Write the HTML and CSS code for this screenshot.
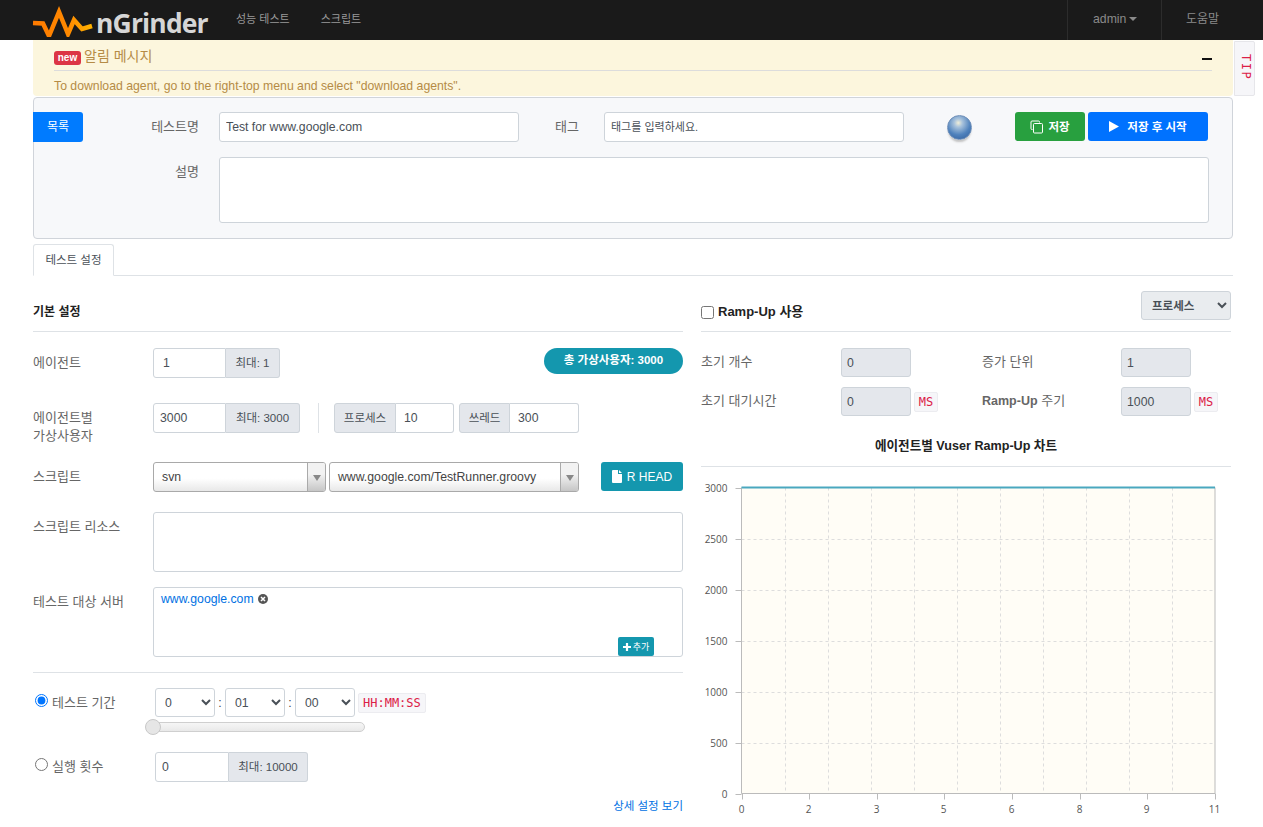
FILE: index.html
```html
<!DOCTYPE html>
<html lang="ko">
<head>
<meta charset="utf-8">
<title>nGrinder</title>
<link rel="stylesheet" href="styles.css">
</head>
<body>
<header class="navbar">
  <a class="brand">
    <svg class="brand-mark" width="62" height="32" viewBox="0 0 62 32">
      <defs><linearGradient id="lg" x1="0" x2="1" y1="0" y2="0"><stop offset="0" stop-color="#ff7a00"/><stop offset="0.6" stop-color="#ff8a00"/><stop offset="1" stop-color="#ffb400"/></linearGradient></defs>
      <path d="M1 19 L11 19.500 L17 32 L27 8 L36 30 L42 16 L50 25 L60 22" transform="translate(0 -1)" fill="none" stroke="url(#lg)" stroke-width="4.500" stroke-linejoin="miter"/>
    </svg>
    <span class="brand-name">nGrinder</span>
  </a>
  <nav class="nav-main"><a>성능 테스트</a><a>스크립트</a></nav>
  <nav class="nav-right"><a class="nav-user">admin<i class="caret"></i></a><a class="nav-help">도움말</a></nav>
</header>

<main class="page">
  <section class="alert">
    <div class="alert-head">
      <span class="badge-new">new</span><span class="alert-title">알림 메시지</span>
      <i class="alert-min"></i>
    </div>
    <p class="alert-text">To download agent, go to the right-top menu and select "download agents".</p>
    <code class="tip">TIP</code>
  </section>

  <section class="panel">
    <div class="panel-row">
      <a class="btn btn-list">목록</a>
      <label class="panel-label name-label">테스트명</label>
      <input class="field name-input" type="text" value="Test for www.google.com">
      <label class="panel-label tag-label">태그</label>
      <input class="field tag-input" type="text" placeholder="태그를 입력하세요.">
      <i class="sphere"></i>
      <a class="btn btn-save">
        <svg width="14" height="14" viewBox="0 0 14 14" fill="none" stroke="#fff" stroke-width="1"><path d="M9.500 2.500 V2 A1 1 0 0 0 8.500 1 H2 A1 1 0 0 0 1 2 V8.500 A1 1 0 0 0 2 9.500 H2.500"/><rect x="3.500" y="3.500" width="9" height="9.500" rx="1"/></svg>
        저장</a>
      <a class="btn btn-start">
        <svg width="10" height="11" viewBox="0 0 10 11"><path d="M0 0 L10 5.500 L0 11 Z" fill="#fff"/></svg>
        저장 후 시작</a>
    </div>
    <div class="panel-row desc-row">
      <label class="panel-label desc-label">설명</label>
      <textarea class="field desc-input"></textarea>
    </div>
  </section>

  <div class="tabs"><a class="tab">테스트 설정</a></div>

  <div class="columns">
    <section class="col-left">
      <h4 class="head">기본 설정</h4>

      <div class="row row-agent">
        <label class="lbl">에이전트</label>
        <div class="group"><input class="gi w73 gi-one" value="1"><span class="addon w54">최대: 1</span></div>
        <span class="pill">총 가상사용자: 3000</span>
      </div>

      <div class="row row-vuser">
        <label class="lbl two">에이전트별<br>가상사용자</label>
        <div class="group"><input class="gi w73" value="3000"><span class="addon w74">최대: 3000</span></div>
        <i class="vline"></i>
        <div class="group"><span class="addon addon-l w62">프로세스</span><input class="gi gi-r w58" value="10"></div>
        <div class="group g-thread"><span class="addon addon-l w51">쓰레드</span><input class="gi gi-r w69" value="300"></div>
      </div>

      <div class="row row-script">
        <label class="lbl">스크립트</label>
        <div class="combo w173"><span>svn</span><b></b></div>
        <div class="combo w250"><span>www.google.com/TestRunner.groovy</span><b></b></div>
        <a class="btn btn-head">
          <svg width="10" height="13" viewBox="0 0 10 13"><path d="M0 1 A1 1 0 0 1 1 0 H6 V4 H10 V12 A1 1 0 0 1 9 13 H1 A1 1 0 0 1 0 12 Z M7 0 L10 3 H7 Z" fill="#fff"/></svg>
          R HEAD</a>
      </div>

      <div class="row row-res">
        <label class="lbl">스크립트 리소스</label>
        <div class="box box-res"></div>
      </div>

      <div class="row row-target">
        <label class="lbl">테스트 대상 서버</label>
        <div class="box box-target">
          <a class="host">www.google.com</a>
          <svg class="host-x" width="10" height="10" viewBox="0 0 10 10"><circle cx="5" cy="5" r="5" fill="#555"/><path d="M3 3 L7 7 M7 3 L3 7" stroke="#fff" stroke-width="1.500"/></svg>
          <a class="btn-add"><svg width="8" height="8" viewBox="0 0 8 8"><path d="M4 0 V8 M0 4 H8" stroke="#fff" stroke-width="2.200"/></svg>추가</a>
        </div>
      </div>

      <hr class="rule">

      <div class="row row-dur">
        <label class="radio"><input type="radio" name="m" checked><span>테스트 기간</span></label>
        <div class="dur-body">
          <div class="dur-line">
            <select class="sel"><option>0</option></select><span class="colon">:</span>
            <select class="sel"><option>01</option></select><span class="colon">:</span>
            <select class="sel"><option>00</option></select>
            <code class="code code-hms">HH:MM:SS</code>
          </div>
          <div class="slider"><i class="knob"></i></div>
        </div>
      </div>

      <div class="row row-count">
        <label class="radio"><input type="radio" name="m"><span>실행 횟수</span></label>
        <div class="group"><input class="gi w74" value="0"><span class="addon w79">최대: 10000</span></div>
      </div>

      <div class="more"><a>상세 설정 보기</a></div>
    </section>

    <section class="col-right">
      <div class="head head-ramp">
        <label class="ramp-check"><input type="checkbox"><span>Ramp-Up 사용</span></label>
        <select class="sel sel-proc"><option>프로세스</option></select>
      </div>
      <div class="ramp-grid">
        <label class="lbl">초기 개수</label><input class="ro" value="0" readonly><span></span>
        <label class="lbl">증가 단위</label><input class="ro" value="1" readonly><span></span>
        <label class="lbl">초기 대기시간</label><input class="ro" value="0" readonly><code class="code">MS</code>
        <label class="lbl"><b>Ramp-Up</b> 주기</label><input class="ro" value="1000" readonly><code class="code">MS</code>
      </div>
      <h4 class="chart-title">에이전트별 Vuser Ramp-Up 차트</h4>
      <svg class="chart" width="530" height="360" viewBox="0 0 530 360" id="chart"></svg>
    </section>
  </div>
</main>
<script src="chart.js"></script>
</body>
</html>
```
FILE: styles.css
```css
* { box-sizing: border-box; }
html, body { margin: 0; height: 827px; overflow: hidden; }
body { font: 12.250px/18px "Liberation Sans", "Noto Sans CJK KR", sans-serif; color: #495057; background: #fff; }
input, select, textarea { font: inherit; color: #495057; }

.navbar { height: 40px; background: #1a1a1a; display: flex; align-items: stretch; padding-left: 32px; }
.brand { display: flex; align-items: flex-start; width: 204px; position: relative; }
.brand-mark { margin-top: 5px; }
.brand-name { font: 700 26.500px/1 "Open Sans", sans-serif; color: #d6d6d6; margin: 10px 0 0 2px; letter-spacing: -0.850px; }
.nav-main { display: flex; gap: 31px; color: #999; font-size: 11px; line-height: 38px; }
.nav-right { margin-left: auto; display: flex; margin-right: 29px; color: #8a8a8a; line-height: 39px; }
.nav-user { width: 95px; border-left: 1px solid #2c2c2c; border-right: 1px solid #2c2c2c; padding-left: 25px; }
.nav-help { width: 72px; padding-left: 24px; font-size: 12px; }
.caret { display: inline-block; margin-left: 3px; vertical-align: 2px; border: 4px solid transparent; border-top-color: #8a8a8a; border-bottom: 0; }

.page { margin-left: 33px; width: 1200px; }

.alert { position: relative; height: 56px; background: #fcf6dd; border-radius: 0 0 4px 4px; padding: 0 21px; color: #b58b45; }
.alert-head { height: 31px; border-bottom: 1px solid #dcdcdc; display: flex; align-items: flex-start; padding-top: 7px; }
.badge-new { width: 27px; height: 14px; margin-top: 4px; background: #dc3545; border-radius: 3px; color: #fff; font: 700 10px/13px "Liberation Sans", sans-serif; text-align: center; }
.alert-title { font-size: 14px; line-height: 18px; margin-left: 3px; }
.alert-min { margin-left: auto; margin-top: 11px; width: 10px; height: 2px; background: #111; }
.alert-text { margin: 6px 0 0; line-height: 18px; }
.tip { position: absolute; left: 1201px; top: 1px; width: 21px; height: 55px; background: #f6f6f9; border: 1px solid #e6e6ea; border-radius: 0 2px 2px 0; color: #dc2047; font: 12px/17px "DejaVu Sans Mono", monospace; writing-mode: vertical-rl; letter-spacing: 1.500px; padding-top: 12px; }

.panel { margin-top: 1px; height: 142px; background: #f7f8fa; border: 1px solid #d0d4da; border-radius: 4px; padding-top: 14px; }
.panel-row { display: flex; align-items: flex-start; margin-left: -1px; }
.btn { display: flex; align-items: center; justify-content: center; color: #fff; border-radius: 3px; font-weight: 700; font-size: 11.500px; }
.btn-list { width: 50px; height: 30px; background: #007bff; border-radius: 0 3px 3px 0; font-weight: 400; font-size: 12px; }
.panel-label { color: #666; line-height: 30px; text-align: right; font-size: 13px; }
.name-label { width: 116px; }
.field { border: 1px solid #ced4da; border-radius: 3px; background: #fff; padding: 0 6px; display: block; }
.name-input { width: 300px; height: 30px; margin-left: 20px; }
.tag-label { width: 60px; }
.tag-input { width: 300px; height: 30px; margin-left: 25px; }
.tag-input::placeholder { color: #495057; opacity: 1; font-size: 11px; }
.sphere { width: 25px; height: 25px; margin: 3px 0 0 42.500px; border-radius: 50%; background: radial-gradient(circle at 45% 30%, #f0eed8 0, #a9c3dc 20%, #4f82bd 58%, #2d5a98 100%); border: 1px solid #6f8fb8; box-shadow: 0 3px 2px -1px #c4c4c4; }
.btn-save { width: 70px; height: 29px; margin-left: 43.500px; background: #28a03f; gap: 4px; }
.btn-start { width: 120px; height: 29px; margin-left: 3px; background: #0072ff; gap: 8px; }
.desc-row { margin-top: 15px; }
.desc-label { width: 166px; line-height: 30px; }
.desc-input { width: 990px; height: 66px; margin-left: 20px; resize: none; }

.tabs { height: 32px; margin-top: 5px; border-bottom: 1px solid #dee2e6; }
.tab { display: block; width: 81px; height: 32px; border: 1px solid #dee2e6; border-bottom-color: #fff; border-radius: 3px 3px 0 0; text-align: center; line-height: 30px; background: #fff; font-size: 11.500px; }

.columns { display: flex; gap: 18px; margin-top: 15px; align-items: flex-start; }
.col-left { width: 650px; }
.col-right { width: 530px; }
.head { height: 41px; margin: 0; border-bottom: 1px solid #dee2e6; color: #222; font-size: 12px; font-weight: 700; line-height: 43px; }

.row { display: flex; align-items: flex-start; }
.lbl { color: #666; line-height: 30px; font-weight: 400; font-size: 13px; }
.row > .lbl { width: 120px; flex: none; }
.lbl.two { line-height: 18px; padding-top: 6px; }
.row-agent { margin-top: 16px; justify-content: flex-start; }
.row-vuser { margin-top: 25px; }
.row-script { margin-top: 17px; }
.row-res { margin-top: 20px; }
.row-target { margin-top: 15px; }
.row-dur { margin-top: 15px; }
.row-count { margin-top: 20px; }

.group { display: flex; height: 30px; }
.gi { height: 30px; border: 1px solid #ced4da; border-radius: 3px 0 0 3px; padding: 0 6px; background: #fff; }
.gi-one { padding-left: 9px; }
.gi-r { border-radius: 0 3px 3px 0; border-left: 0; padding-left: 8px; }
.addon { height: 30px; background: #e4e7ec; border: 1px solid #ced4da; border-left: 0; border-radius: 0 3px 3px 0; display: flex; align-items: center; justify-content: center; color: #495057; font-size: 11.500px; }
.addon-l { border-left: 1px solid #ced4da; border-radius: 3px 0 0 3px; }
.w73 { width: 73px; } .w74 { width: 74px; } .w54 { width: 54px; }
.w79 { width: 79px; } .w62 { width: 62px; } .w58 { width: 58px; }
.w51 { width: 51px; } .w69 { width: 69px; }
.pill { margin-left: auto; width: 139px; height: 26px; border-radius: 13px; background: #1497ae; color: #fff; font-weight: 700; font-size: 11.500px; text-align: center; line-height: 25px; }
.vline { width: 1px; height: 30px; background: #dee2e6; margin: 0 15px 0 18px; }
.g-thread { margin-left: 5px; }
.combo { position: relative; height: 30px; border: 1px solid #a9a9a9; border-radius: 3px; background: linear-gradient(#fff 55%, #e8e8e8); padding: 0 8px; line-height: 28px; color: #444; }
.combo b { position: absolute; top: 0; right: 0; width: 18px; height: 28px; background: linear-gradient(#f2f2f2 40%, #c6c6c6); border-left: 1px solid #aaa; border-radius: 0 2px 2px 0; }
.combo b::after { content: ""; position: absolute; left: 5px; top: 12px; border: 4px solid transparent; border-top: 6px solid #888; border-bottom: 0; }
.w173 { width: 173px; } .w250 { width: 250px; margin-left: 3px; }
.btn-head { width: 82px; height: 29px; margin-left: 22px; background: #1497ae; font-weight: 400; font-size: 12px; gap: 5px; }

.box { width: 530px; border: 1px solid #ced4da; border-radius: 3px; background: #fff; }
.box-res { height: 60px; }
.box-target { height: 70px; position: relative; padding: 2px 7px; }
.host { color: #0071e3; }
.host-x { margin-left: 1px; vertical-align: -1px; }
.btn-add { position: absolute; right: 28px; bottom: 0; width: 36px; height: 19px; background: #1497ae; border-radius: 2px; color: #fff; font-size: 9px; line-height: 18px; display: flex; align-items: center; justify-content: center; gap: 2px; }
.rule { margin: 15px 0 0; border: 0; border-top: 1px solid #dee2e6; }

.radio { width: 122px; flex: none; display: flex; align-items: flex-start; color: #666; padding-left: 2px; line-height: 30px; font-size: 13px; }
.radio input { margin: 6px 4px 0 0; width: 13px; height: 13px; }
.dur-line { display: flex; align-items: center; height: 29px; }
.sel { height: 29px; border: 1px solid #ced4da; border-radius: 3px; background: #fff; padding: 0 5px; width: 60px; }
.colon { width: 10px; text-align: center; color: #444; }
.code { font: 12px/18px "DejaVu Sans Mono", monospace; color: #dc2047; background: #f6f6f9; border: 1px solid #ececf0; border-radius: 2px; }
.code-hms { margin-left: 3px; padding: 0 4px; height: 20px; width: 68px; white-space: nowrap; }
.dur-body { position: relative; }
.slider { position: relative; width: 210px; height: 10px; margin: 5px 0 0 0; background: linear-gradient(#f6f6f6, #e9e9e9); border: 1px solid #cfcfcf; border-radius: 5px; left: 0; }
.knob { position: absolute; left: -11px; top: -4px; width: 16px; height: 16px; border-radius: 50%; background: #e6e6e6; border: 1px solid #c8c8c8; }
.more { text-align: right; margin-top: 15px; font-size: 11.500px; }
.more a { color: #0071e3; }

.head-ramp { display: flex; align-items: flex-start; justify-content: space-between; height: 41px; }
.ramp-check { display: flex; align-items: center; height: 41px; font-size: 13px; color: #222; line-height: 18px; }
.ramp-check input { margin: 1px 4px 0 0; width: 13px; height: 13px; }
.sel-proc { width: 90px; height: 29px; background: #e9ecef; padding: 0 6px; font-size: 11.500px; }
.ramp-grid { display: grid; grid-template-columns: 140px 70px 71px 139px 70px 40px; grid-auto-rows: 29px; row-gap: 10px; margin-top: 16px; align-items: center; }
.ramp-grid .lbl { line-height: 27px; height: 29px; }
.ramp-grid b { font-weight: 700; font-size: 12.500px; }
.ro { width: 70px; height: 29px; background: #e4e7ec; border: 1px solid #ced4da; border-radius: 3px; padding: 0 5px; }
.ramp-grid .code { width: 24px; height: 20px; margin-left: 3px; text-align: center; }
.chart-title { margin: 21px 0 0; height: 30px; border-bottom: 1px solid #dee2e6; text-align: center; color: #222; font-size: 12.600px; font-weight: 700; line-height: 18px; }
.chart { display: block; }
.chart text { font: 10px "Open Sans", sans-serif; fill: #555; }
```
FILE: chart.js
```js
(function () {
  var svg = document.getElementById('chart'), ns = 'http://www.w3.org/2000/svg';
  var L = 40.5, R = 514, T = 20.5, B = 326.5;
  function add(n, a, t) {
    var e = document.createElementNS(ns, n);
    for (var k in a) e.setAttribute(k, a[k]);
    if (t !== undefined) e.textContent = t;
    svg.appendChild(e);
  }
  add('rect', { x: L, y: T, width: R - L, height: B - T, fill: '#fffdf6' });
  var i, y, x;
  for (i = 1; i < 6; i++) {
    y = Math.round(B - i * (B - T) / 6) + 0.5;
    add('line', { x1: L, x2: R, y1: y, y2: y, stroke: '#ddd', 'stroke-dasharray': '3 3' });
  }
  for (i = 1; i < 11; i++) {
    x = Math.round(L + i * (R - L) / 11) + 0.5;
    add('line', { x1: x, x2: x, y1: T, y2: B, stroke: '#ddd', 'stroke-dasharray': '3 3' });
  }
  add('path', { d: 'M' + L + ' ' + T + 'V' + B + 'H' + R + 'V' + T, fill: 'none', stroke: '#bbb' });
  for (i = 0; i <= 6; i++) {
    y = Math.round(B - i * (B - T) / 6) + 0.5;
    add('line', { x1: L - 6, x2: L, y1: y, y2: y, stroke: '#bbb' });
    add('text', { x: L - 14, y: y + 3.5, 'text-anchor': 'end' }, String(i * 500));
  }
  ['0', '2', '3', '5', '6', '8', '9', '11'].forEach(function (s, j) {
    x = Math.round(L + j * (R - L) / 7) + 0.5;
    add('line', { x1: x, x2: x, y1: B, y2: B + 6, stroke: '#bbb' });
    add('text', { x: x - 1, y: B + 19, 'text-anchor': 'middle' }, s);
  });
  add('line', { x1: L, x2: R, y1: T, y2: T, stroke: '#4aa8bf', 'stroke-width': 2 });
})();
```
